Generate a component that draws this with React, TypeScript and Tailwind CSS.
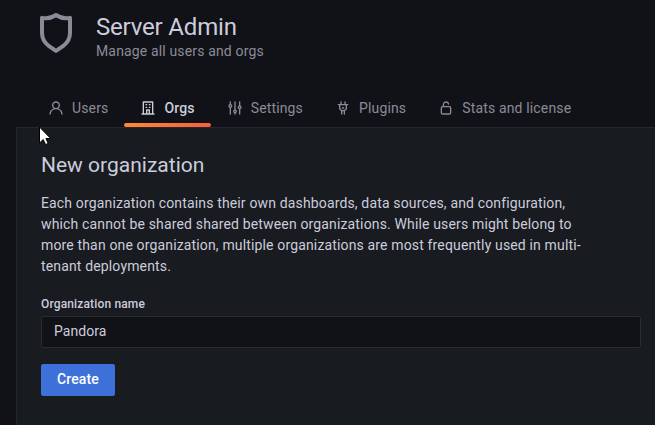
import React from "react";

const paths = {
  shield:
    "M19.63,3.65a1,1,0,0,0-.84-.2,8,8,0,0,1-6.22-1.27,1,1,0,0,0-1.14,0A8,8,0,0,1,5.21,3.45a1,1,0,0,0-.84.2A1,1,0,0,0,4,4.43v7.45a9,9,0,0,0,3.77,7.33l3.65,2.6a1,1,0,0,0,1.16,0l3.65-2.6A9,9,0,0,0,20,11.88V4.43A1,1,0,0,0,19.63,3.65ZM18,11.88a7,7,0,0,1-2.93,5.7L12,19.77,8.93,17.58A7,7,0,0,1,6,11.88V5.58a10,10,0,0,0,6-1.39,10,10,0,0,0,6,1.39Z",
  user: "M15.71,12.71a6,6,0,1,0-7.42,0,10,10,0,0,0-6.22,8.18,1,1,0,0,0,2,.22,8,8,0,0,1,15.9,0,1,1,0,0,0,1,.89h.11a1,1,0,0,0,.88-1.1A10,10,0,0,0,15.71,12.71ZM12,12a4,4,0,1,1,4-4A4,4,0,0,1,12,12Z",
  building:
    "M14,8h1a1,1,0,0,0,0-2H14a1,1,0,0,0,0,2Zm0,4h1a1,1,0,0,0,0-2H14a1,1,0,0,0,0,2ZM9,8h1a1,1,0,0,0,0-2H9A1,1,0,0,0,9,8Zm0,4h1a1,1,0,0,0,0-2H9a1,1,0,0,0,0,2Zm12,8H20V3a1,1,0,0,0-1-1H5A1,1,0,0,0,4,3V20H3a1,1,0,0,0,0,2H21a1,1,0,0,0,0-2Zm-8,0H11V16h2Zm5,0H15V15a1,1,0,0,0-1-1H10a1,1,0,0,0-1,1v5H6V4H18Z",
  sliders:
    "M20,8.18V3a1,1,0,0,0-2,0V8.18a3,3,0,0,0,0,5.64V21a1,1,0,0,0,2,0V13.82a3,3,0,0,0,0-5.64ZM19,12a1,1,0,1,1,1-1A1,1,0,0,1,19,12Zm-6,2.18V3a1,1,0,0,0-2,0V14.18a3,3,0,0,0,0,5.64V21a1,1,0,0,0,2,0V19.82a3,3,0,0,0,0-5.64ZM12,18a1,1,0,1,1,1-1A1,1,0,0,1,12,18ZM6,6.18V3A1,1,0,0,0,4,3V6.18a3,3,0,0,0,0,5.64V21a1,1,0,0,0,2,0V11.82A3,3,0,0,0,6,6.18ZM5,10A1,1,0,1,1,6,9,1,1,0,0,1,5,10Z",
  plug: "M19,6H16V3a1,1,0,0,0-2,0V6H10V3A1,1,0,0,0,8,3V6H5A1,1,0,0,0,5,8H6v5a1,1,0,0,0,.29.71L9,16.41V21a1,1,0,0,0,2,0V17h2v4a1,1,0,0,0,2,0V16.41l2.71-2.7A1,1,0,0,0,18,13V8h1a1,1,0,0,0,0-2Zm-3,6.59L13.59,15H10.41L8,12.59V8h8ZM11,13h2a1,1,0,0,0,0-2H11a1,1,0,0,0,0,2Z",
  unlock:
    "M17,9H9V7a3,3,0,0,1,5.12-2.13,3.08,3.08,0,0,1,.78,1.38,1,1,0,1,0,1.94-.5,5.09,5.09,0,0,0-1.31-2.29A5,5,0,0,0,7,7V9a3,3,0,0,0-3,3v7a3,3,0,0,0,3,3H17a3,3,0,0,0,3-3V12A3,3,0,0,0,17,9Zm1,10a1,1,0,0,1-1,1H7a1,1,0,0,1-1-1V12a1,1,0,0,1,1-1H17a1,1,0,0,1,1,1Z",
};

type IconName = keyof typeof paths;

function Icon({ name, className }: { name: IconName; className: string }) {
  return (
    <svg viewBox="0 0 24 24" fill="currentColor" className={className}>
      <path d={paths[name]} />
    </svg>
  );
}

function Tab({ icon, label, active = false }: { icon: IconName; label: string; active?: boolean }) {
  return (
    <li className={active ? "relative text-[#ccccdc]" : "relative text-[#8b8b97]"}>
      <a className="flex h-[38px] items-center gap-2 px-4 whitespace-nowrap">
        <Icon name={icon} className="size-4 shrink-0" />
        <span className={active ? "font-medium" : ""}>{label}</span>
      </a>
      {active && (
        <span className="absolute inset-x-0 bottom-0 h-1 rounded-[2px] bg-linear-to-r from-[#ff8833] to-[#f55f3e]" />
      )}
    </li>
  );
}

export default function App() {
  return (
    <div className="relative h-[425px] w-[655px] overflow-hidden bg-[#111217] font-['Roboto',sans-serif] text-sm tracking-[0.15px] text-[#ccccdc]">
      <header className="flex h-[89px] gap-4 pt-[9px] pl-8">
        <Icon name="shield" className="size-12 shrink-0 text-[#8b8b97]" />
        <div className="pt-1">
          <h1 className="text-2xl leading-7 tracking-[-0.18px]">Server Admin</h1>
          <p className="leading-[21px] text-[#8b8b97]">Manage all users and orgs</p>
        </div>
      </header>
      <nav>
        <ul className="flex h-[38px] pl-8">
          <Tab icon="user" label="Users" />
          <Tab icon="building" label="Orgs" active />
          <Tab icon="sliders" label="Settings" />
          <Tab icon="plug" label="Plugins" />
          <Tab icon="unlock" label="Stats and license" />
        </ul>
      </nav>
      <main className="ml-4 h-[298px] border-t border-l border-[#25272c] bg-[#181b1f] pt-6 pl-6">
        <h2 className="text-[21px] leading-[26px] tracking-normal">New organization</h2>
        <p className="mt-[15px] w-[550px] leading-[21px]">
          Each organization contains their own dashboards, data sources, and configuration, which
          cannot be shared shared between organizations. While users might belong to more than one
          organization, multiple organizations are most frequently used in multi-tenant deployments.
        </p>
        <form className="mt-5">
          <label className="block text-xs leading-[15px] font-medium">Organization name</label>
          <div className="mt-1 flex h-8 w-[600px] items-center rounded-[2px] border border-[#2c2d32] bg-[#111217] px-3 pb-0.5 tracking-[0.05px]">
            Pandora
          </div>
          <button
            type="button"
            className="mt-4 flex h-8 w-[74px] items-center justify-center rounded-[2px] bg-[#3d71d9] pb-0.5 font-medium text-white"
          >
            Create
          </button>
        </form>
      </main>
      <svg viewBox="0 0 12 19" className="absolute top-[126px] left-[39px] h-[19px] w-3">
        <path
          d="M.5 1v16l3.7-3.5 2.4 5.1 2.6-1.2-2.3-4.9h4.8Z"
          fill="white"
          stroke="black"
          strokeWidth="1"
        />
      </svg>
    </div>
  );
}
